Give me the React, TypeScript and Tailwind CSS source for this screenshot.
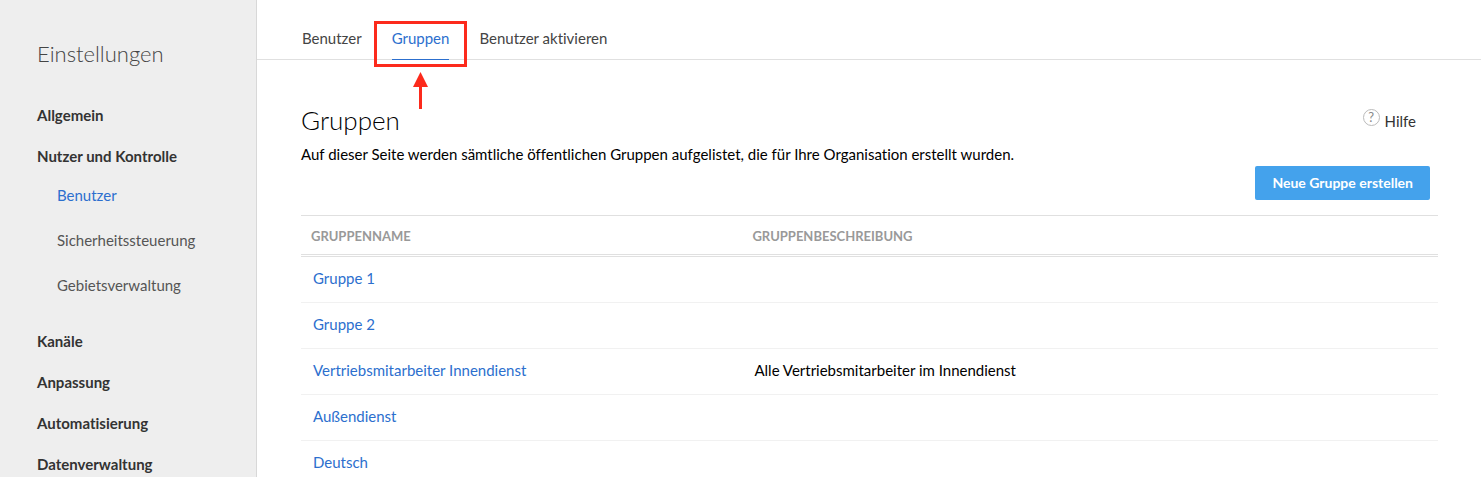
import React from "react";

type NavSection = { label: string; children?: { label: string; active?: boolean }[] };

const sections: NavSection[] = [
  { label: "Allgemein" },
  {
    label: "Nutzer und Kontrolle",
    children: [
      { label: "Benutzer", active: true },
      { label: "Sicherheitssteuerung" },
      { label: "Gebietsverwaltung" },
    ],
  },
  { label: "Kanäle" },
  { label: "Anpassung" },
  { label: "Automatisierung" },
  { label: "Datenverwaltung" },
];

const groups = [
  { name: "Gruppe 1", description: "" },
  { name: "Gruppe 2", description: "" },
  { name: "Vertriebsmitarbeiter Innendienst", description: "Alle Vertriebsmitarbeiter im Innendienst" },
  { name: "Außendienst", description: "" },
  { name: "Deutsch", description: "" },
];

function Sidebar() {
  return (
    <aside className="w-[257px] shrink-0 border-r border-[#d8d8d8] bg-[#eeeeee] pl-[37px] pt-[39px]">
      <h2 className="text-[22px] font-light leading-[30px] text-[#444444]">Einstellungen</h2>
      <nav aria-label="Einstellungen" className="pt-[26px]">
        <ul>
          {sections.map((section) => (
            <li key={section.label}>
              <a href="#" className="block text-[15px] font-bold leading-[41px] text-[#333333]">
                {section.label}
              </a>
              {section.children && (
                <ul className="-mt-1 mb-[13px] pl-5">
                  {section.children.map((item) => (
                    <li key={item.label}>
                      <a
                        href="#"
                        className={
                          item.active
                            ? "block text-[15px] leading-[45px] text-[#2c6fce]"
                            : "block text-[15px] leading-[45px] text-[#555555]"
                        }
                      >
                        {item.label}
                      </a>
                    </li>
                  ))}
                </ul>
              )}
            </li>
          ))}
        </ul>
      </nav>
    </aside>
  );
}

function TabCallout() {
  return (
    <span aria-hidden="true" className="pointer-events-none absolute -inset-x-[18px] top-[21px] z-10 flex flex-col items-center">
      <span className="h-[46px] w-full border-[3px] border-[#fc2a1c]" />
      <svg className="mt-[5px] h-[37px] w-[15px]" viewBox="0 0 15 37" fill="#fc2a1c">
        <path d="M7.5 0 L15 15 H0 Z" />
        <rect x="6" y="14" width="3" height="23" />
      </svg>
    </span>
  );
}

function Tabs() {
  return (
    <nav aria-label="Benutzer" className="flex h-[60px] gap-[30px] border-b border-[#e0e0e0] pl-[45px] text-[15px] text-[#444444]">
      <a href="#" className="pt-[26px] leading-6">Benutzer</a>
      <a href="#" aria-current="page" className="relative -mb-px border-b border-[#2c6fce] pt-[26px] leading-6 text-[#2c6fce]">
        Gruppen
        <TabCallout />
      </a>
      <a href="#" className="pt-[26px] leading-6">Benutzer aktivieren</a>
    </nav>
  );
}

export default function App() {
  return (
    <div className="flex min-h-screen bg-white font-['Lato',sans-serif] [font-variant-ligatures:none]">
      <Sidebar />
      <main className="min-w-0 flex-1">
        <Tabs />
        <div className="pl-11 pr-[43px] pt-[42px]">
          <div className="flex items-center justify-between pr-[22px]">
            <h1 className="text-[26px] font-light leading-9 text-black">Gruppen</h1>
            <a href="#" className="flex items-start gap-[5px] text-[15px] text-[#333333]">
              <span className="flex size-[17px] items-center justify-center rounded-full border border-[#bbbbbb] text-[13px] text-[#888888]">
                ?
              </span>
              <span className="pt-[2px] leading-5">Hilfe</span>
            </a>
          </div>
          <p className="pt-1 text-[15px] leading-6 text-black">
            Auf dieser Seite werden sämtliche öffentlichen Gruppen aufgelistet, die für Ihre Organisation erstellt wurden.
          </p>
          <div className="flex justify-end pb-[15px] pr-2">
            <button type="button" className="h-[34px] rounded-[2px] bg-[#44a2ec] px-[17px] pb-[2px] text-[14px] font-bold text-white">
              Neue Gruppe erstellen
            </button>
          </div>
          <table className="w-full table-fixed border-separate border-spacing-0 text-left">
            <thead>
              <tr className="h-[42px] text-[13px] uppercase text-[#999999]">
                <th className="w-[39%] border-b-[3px] border-t border-double border-[#e0e0e0] px-[10px] pb-0 pt-[3px] font-bold">Gruppenname</th>
                <th className="border-b-[3px] border-t border-double border-[#e0e0e0] px-[8px] pb-0 pt-[3px] font-bold">Gruppenbeschreibung</th>
              </tr>
            </thead>
            <tbody className="text-[15px]">
              {groups.map((group) => (
                <tr key={group.name} className="h-[46px]">
                  <td className="border-b border-[#f1f1f1] px-3 pb-[3px]">
                    <a href="#" className="text-[#2c6fce]">{group.name}</a>
                  </td>
                  <td className="border-b border-[#f1f1f1] px-[10px] pb-[3px] text-black">{group.description}</td>
                </tr>
              ))}
            </tbody>
          </table>
        </div>
      </main>
    </div>
  );
}
